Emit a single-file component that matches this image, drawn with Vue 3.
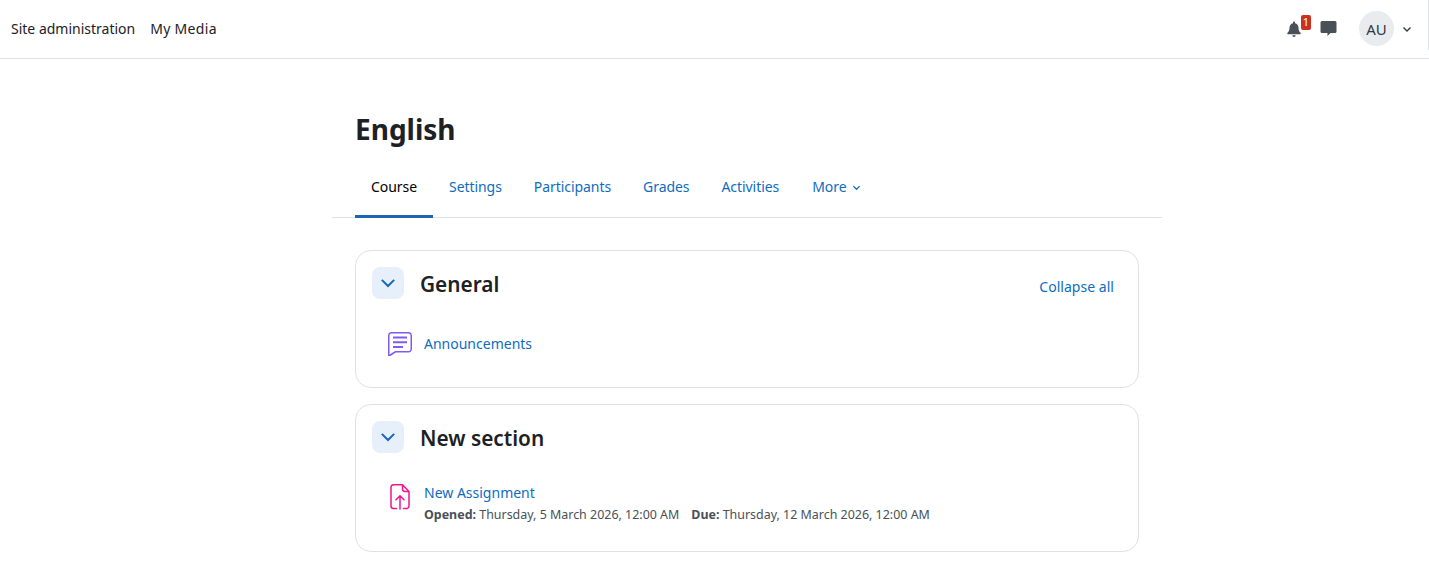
<script setup>
const tabs = ['Settings', 'Participants', 'Grades', 'Activities']
</script>

<template>
  <div class="page">
    <header class="navbar">
      <nav class="primary">
        <a>Site administration</a>
        <a class="media">My Media</a>
      </nav>
      <div class="tools">
        <span class="bell">
          <svg width="16" height="16" viewBox="0 0 16 16"><path fill="#495057" d="M8 0.6c-.6 0-1 .5-1 1v.6C4.900 2.700 3.500 4.500 3.500 6.700c0 2.900-.9 3.900-1.800 4.800-.3.300-.4.500-.4.800 0 .6.400 1 1 1h11.400c.6 0 1-.4 1-1 0-.3-.1-.5-.4-.8-.9-.9-1.800-1.900-1.800-4.800 0-2.200-1.400-4-3.500-4.500v-.6c0-.5-.4-1-1-1zM6.300 14.200a1.700 1.700 0 0 0 3.400 0z"/></svg>
          <b class="badge">1</b>
        </span>
        <svg class="chat" width="17" height="17" viewBox="0 0 17 17"><path fill="#495057" d="M2 1h13a1.500 1.500 0 0 1 1.500 1.500v9A1.500 1.500 0 0 1 15 13h-4.500L7.500 16v-3H2A1.500 1.500 0 0 1 .5 11.500v-9A1.500 1.500 0 0 1 2 1z"/></svg>
        <span class="avatar">AU</span>
        <svg class="caret" width="10" height="10" viewBox="0 0 10 10"><path d="M1.500 3.500 5 7l3.500-3.500" fill="none" stroke="#343a40" stroke-width="1.400"/></svg>
      </div>
    </header>

    <main class="main">
      <h1 class="title">English</h1>
      <div class="tabs">
        <a class="tab active">Course</a>
        <a v-for="t in tabs" :key="t" class="tab">{{ t }}</a>
        <a class="tab more">More <svg width="9" height="9" viewBox="0 0 10 10"><path d="M1.500 3.500 5 7l3.500-3.500" fill="none" stroke="#0f6cbf" stroke-width="1.400"/></svg></a>
      </div>

      <section class="card first">
        <div class="head">
          <span class="toggle"><svg width="18" height="18" viewBox="0 0 16 16"><path d="M2.500 5.200 8 10.700l5.500-5.500" fill="none" stroke="#1767bd" stroke-width="1.800"/></svg></span>
          <h2>General</h2>
          <a class="collapse">Collapse all</a>
        </div>
        <div class="activity">
          <svg class="icon" width="24" height="24" viewBox="0 0 24 24"><path fill="none" stroke="#7b5cf5" stroke-width="1.500" stroke-linejoin="round" d="M3.500 .75h17A2.750 2.750 0 0 1 23.250 3.500v13.500a2.750 2.750 0 0 1-2.750 2.750H7.500l-5.500 3.500a.6.6 0 0 1-1.250-.4V3.500A2.750 2.750 0 0 1 3.500 .75z"/><path fill="none" stroke="#7b5cf5" stroke-width="2" d="M5 5.500h14M5 10.200h14M5 15h10"/></svg>
          <a class="name">Announcements</a>
        </div>
      </section>

      <section class="card second">
        <div class="head">
          <span class="toggle"><svg width="18" height="18" viewBox="0 0 16 16"><path d="M2.500 5.200 8 10.700l5.500-5.500" fill="none" stroke="#1767bd" stroke-width="1.800"/></svg></span>
          <h2>New section</h2>
        </div>
        <div class="activity assign">
          <svg class="icon doc" width="24" height="26" viewBox="0 0 24 26"><path fill="none" stroke="#f0168c" stroke-width="1.500" stroke-linejoin="round" stroke-linecap="round" d="M8.500 24.500H5.500A2.500 2.500 0 0 1 3 22V3A2.500 2.500 0 0 1 5.500 .75h9L21 7.500V22a2.500 2.500 0 0 1-2.500 2.500H15.500M14.500 .75V5a2.500 2.500 0 0 0 2.500 2.500h4M12 25V12M8 15.800 12 11.800l4 4"/></svg>
          <div>
            <a class="name">New Assignment</a>
            <div class="dates"><span><strong>Opened:</strong> Thursday, 5 March 2026, 12:00 AM</span><span><strong>Due:</strong> Thursday, 12 March 2026, 12:00 AM</span></div>
          </div>
        </div>
      </section>
    </main>
    <div class="edge"></div>
  </div>
</template>

<style>
html, body { margin: 0; background: #fff; }
</style>

<style scoped>
.page { position: relative; height: 564px; overflow: hidden; font-family: "Noto Sans", "Open Sans", sans-serif; font-size: 14px; color: #1d2125; }
a { text-decoration: none; }
.navbar { height: 57px; padding-bottom: 1px; border-bottom: 1px solid #dee2e6; display: flex; align-items: center; justify-content: space-between; }
.primary { display: flex; gap: 16px; padding-left: 11px; }
.primary a { color: #1d2125; }
.primary .media { letter-spacing: .3px; margin-left: -1px; }
.tools { display: flex; align-items: center; padding-right: 17px; }
.bell { position: relative; width: 16px; height: 16px; margin-right: 18px; }
.bell svg { display: block; }
.badge { position: absolute; left: 15px; top: -6px; width: 10px; height: 15px; border-radius: 2px; background: #ca3120; color: #fff; font-size: 11px; font-weight: 400; line-height: 14px; text-align: center; }
.chat { margin-right: 22px; }
.avatar { width: 35px; height: 35px; border-radius: 50%; background: #e9ecef; color: #343a40; font-size: 15px; display: flex; align-items: center; justify-content: center; margin-right: 8px; }
.caret { display: block; }
.main { width: 830px; margin-left: 332px; }
.title { margin: 0; padding: 51px 23px 0; font-size: 28px; line-height: 38px; font-weight: 700; color: #1d2125; }
.tabs { display: flex; margin-top: 9px; padding-left: 23px; height: 60px; border-bottom: 1px solid #dee2e6; letter-spacing: -0.06px; }
.tab { padding: 0 16px; line-height: 59px; color: #0f6cbf; }
.more { margin-left: 1px; }
.more svg { margin-left: 2px; }
.tab.active { color: #000; border-bottom: 3px solid #1d65b3; height: 58px; }
.card { margin: 0 23px; border: 1px solid #dee2e6; border-radius: 16px; box-sizing: border-box; padding: 16px; }
.first { margin-top: 32px; height: 138px; }
.second { margin-top: 16px; height: 148px; }
.head { display: flex; align-items: flex-start; height: 32px; }
.toggle { width: 32px; height: 32px; border-radius: 8px; background: #e7f0fa; display: flex; align-items: center; justify-content: center; margin-right: 16px; }
h2 { margin: 1px 0 0; font-size: 20.8px; font-weight: 600; color: #1d2125; line-height: 32px; }
.collapse { margin-left: auto; color: #0f6cbf; margin-right: 8px; margin-top: 10px; letter-spacing: .03px; }
.activity { display: flex; align-items: center; padding-left: 16px; margin-top: 33px; gap: 12px; }
.assign { margin-top: 30px; align-items: flex-start; }
.doc { margin-top: 1px; }
.name { color: #0f6cbf; line-height: 20px; display: block; }
.dates { font-size: 12.45px; color: #495057; margin-top: 3px; display: flex; gap: 12px; line-height: 18px; }
.edge { position: absolute; right: 0; top: 0; width: 1px; height: 50px; background: #dee2e6; }
</style>
